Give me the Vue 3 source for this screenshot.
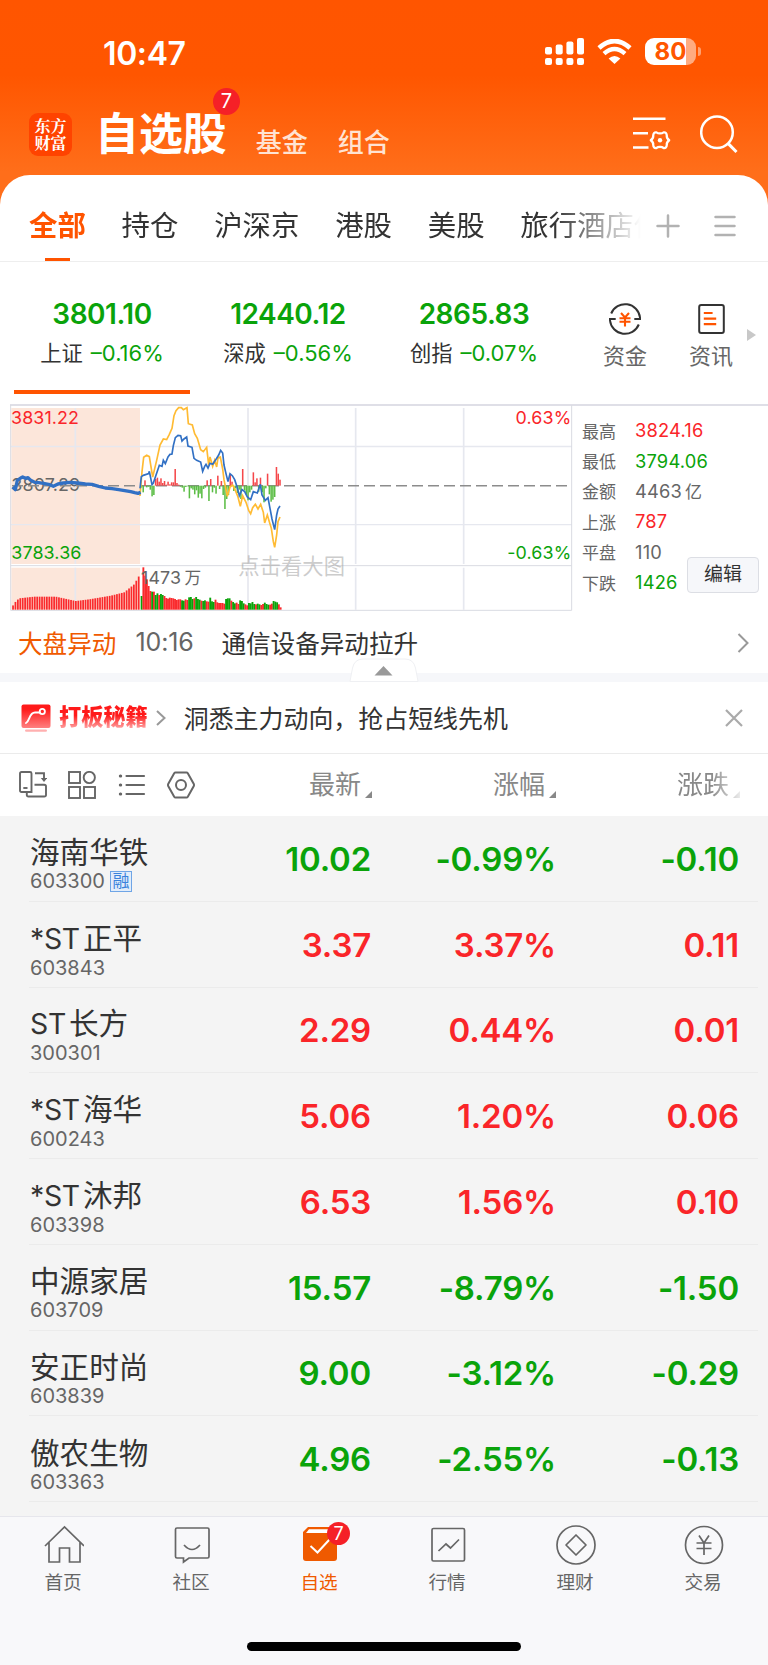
<template>
  <div class="phone">
    <header class="top">
      <div class="status">
        <span class="clock">10:47</span>
        <div class="status-icons">
          <svg class="signal" viewBox="0 0 39 27" fill="#fff">
            <rect x="0" y="9" width="7" height="7.5" rx="2" />
            <rect x="10.7" y="6.5" width="7" height="10" rx="2" />
            <rect x="21.4" y="3.5" width="7" height="13" rx="2" />
            <rect x="32" y="0" width="7" height="16.5" rx="2" />
            <rect x="0" y="20" width="7" height="7" rx="2" />
            <rect x="10.7" y="20" width="7" height="7" rx="2" />
            <rect x="21.4" y="20" width="7" height="7" rx="2" />
            <rect x="32" y="20" width="7" height="7" rx="2" />
          </svg>
          <svg class="wifi" viewBox="0 0 35 25">
            <path d="M2 9 Q17.5 -5 33 9" fill="none" stroke="#fff" stroke-width="4.6" />
            <path d="M7 14.6 Q17.5 5.4 28 14.6" fill="none" stroke="#fff" stroke-width="4.4" />
            <path d="M11.6 19.4 Q17.5 14.4 23.4 19.4 L17.5 25 Z" fill="#fff" />
          </svg>
          <div class="battery"><span>80</span></div>
        </div>
      </div>
      <div class="nav">
        <div class="logo"><span>东方</span><span>财富</span></div>
        <h1 class="title">自选股<i class="badge">7</i></h1>
        <span class="sub">基金</span>
        <span class="sub sub-2">组合</span>
        <svg class="ic-filter" viewBox="0 0 38 36" fill="none" stroke="#fff" stroke-width="2.6">
          <path d="M0 2.8 H32.5 M0 17.3 H15 M0 31.5 H15.5" />
          <path
            d="M17.8 24.2 Q20.6 22.2 20.2 19.6 Q20.4 16 23.4 16.4 Q25.2 17.6 27 17.4 Q28.8 17.6 30.6 16.4 Q33.6 16 33.8 19.6 Q33.4 22.2 36.2 24.2 Q33.4 26.2 33.8 28.8 Q33.6 32.4 30.6 32 Q28.8 30.8 27 31 Q25.2 30.8 23.4 32 Q20.4 32.4 20.2 28.8 Q20.6 26.2 17.8 24.2 Z"
            stroke-linejoin="round" stroke-width="2.3"
          />
          <circle cx="27" cy="24.2" r="2.2" fill="#fff" stroke="none" />
        </svg>
        <svg class="ic-search" viewBox="0 0 38 39" fill="none" stroke="#fff" stroke-width="2.5">
          <circle cx="17" cy="17.3" r="15.8" />
          <path d="M28.3 28.6 L36.5 37" stroke-width="3" />
        </svg>
      </div>
    </header>

    <main class="card">
      <nav class="tabs">
        <div class="tab-list">
          <span v-for="(t, i) in tabs" :key="t" class="tab" :class="{ on: i === 0 }">{{ t }}</span>
        </div>
        <svg class="ic-plus" viewBox="0 0 24 24" stroke="#b2b2b2" stroke-width="2.5" stroke-linecap="round">
          <path d="M1.5 12 H22.5 M12 1.5 V22.5" />
        </svg>
        <svg class="ic-menu" viewBox="0 0 22 22" stroke="#b2b2b2" stroke-width="2.5" stroke-linecap="round">
          <path d="M1.5 2 H20.5 M1.5 11 H20.5 M1.5 20 H20.5" />
        </svg>
      </nav>

      <section class="indices">
        <div v-for="(q, i) in indices" :key="q.name" class="index" :class="{ on: i === 0 }">
          <b>{{ q.value }}</b>
          <p>{{ q.name }}<em>{{ q.pct }}</em></p>
        </div>
        <div class="quick fund">
          <svg viewBox="0 0 32 32" fill="none" stroke="#333" stroke-width="2">
            <path d="M2.2 10.5 A15 15 0 0 1 31 14.5 V16 H25.3" />
            <path d="M29.8 21.5 A15 15 0 0 1 1 17.5 V16 H6.7" />
            <path d="M12 10 L16 14.5 L20 10 M10.5 15.2 H21.5 M10.5 18.8 H21.5 M16 14.5 V23.5" stroke="#ff5400" stroke-width="2.1" />
          </svg>
          <span>资金</span>
        </div>
        <div class="quick">
          <svg viewBox="0 0 32 32" fill="none" stroke="#333" stroke-width="2">
            <rect x="4.2" y="2" width="24.6" height="28" rx="2" />
            <path d="M8.8 10 H17.6 M8.8 15.6 H21.2 M8.8 21.2 H21.2" stroke="#ff5400" stroke-width="2.2" />
          </svg>
          <span>资讯</span>
        </div>
        <i class="more"></i>
      </section>

      <section class="market">
        <!-- intraday chart, three units per pixel -->
        <svg class="chart" viewBox="0 27 1719 624">
          <rect x="34" y="39" width="386" height="468" fill="#fce6da" />
          <rect x="34" y="518" width="386" height="126" fill="#fce6da" />
          <g stroke="#e6e8ef" fill="none">
            <path d="M32 154.500 H1716 M32 389 H1716" stroke-width="4" />
            <path d="M226 39 V507 M226 518 V644 M744 39 V507 M744 518 V644 M1067 39 V507 M1067 518 V644 M1391 39 V507 M1391 518 V644" stroke-width="5" />
            <path d="M32 30 V646 H1715 V30 M32 512 H1715" stroke="#d9dbe2" stroke-width="3" />
          </g>
          <text x="34" y="289" class="t gray">3807.29</text>
          <path d="M36 272 H1706" stroke="#8c8c8c" stroke-width="4.500" stroke-dasharray="33 15" />
          <rect v-for="(b, i) in auction" :key="'a' + i" :x="b.x" :y="b.y" width="5.200" :height="644 - b.y" fill="#fa2a2d" />
          <rect v-for="(b, i) in volumes" :key="'v' + i" :x="b.x" :y="b.y" width="5.600" :height="644 - b.y" :fill="b.c" />
          <rect v-for="(b, i) in flow" :key="'f' + i" :x="b.x" :y="b.y" width="4.600" :height="b.h" :fill="b.c" />
          <polyline :points="avgLine" fill="none" stroke="#ffbb33" stroke-width="5" />
          <polyline :points="preLine" fill="none" stroke="#3170c4" stroke-width="10" stroke-linejoin="round" />
          <polyline :points="priceLine" fill="none" stroke="#3170c4" stroke-width="5" />
          <text x="33" y="86" class="t red">3831.22</text>
          <text x="34" y="491" class="t green">3783.36</text>
          <text x="1714" y="86" class="t red end">0.63%</text>
          <text x="1714" y="491" class="t green end">-0.63%</text>
          <text x="423" y="568" class="t gray">1473<tspan dx="10" font-size="50">万</tspan></text>
          <text x="715" y="537" class="hint">点击看大图</text>
        </svg>
        <dl class="stats">
          <div v-for="s in stats" :key="s.k">
            <dt>{{ s.k }}</dt>
            <dd :class="s.c">{{ s.v }}<span v-if="s.u" class="unit">{{ s.u }}</span></dd>
          </div>
        </dl>
        <button class="edit">编辑</button>
      </section>

      <section class="news">
        <span class="news-tag">大盘异动</span>
        <time>10:16</time>
        <span class="news-text">通信设备异动拉升</span>
        <svg class="chev" viewBox="0 0 12 20" fill="none" stroke="#999" stroke-width="2">
          <path d="M1.500 1 L10.500 10 L1.500 19" />
        </svg>
        <svg class="bump" viewBox="0 0 70 24">
          <path d="M1 23.500 L3.500 10 Q5.500 1 14 1 H56 Q64.500 1 66.500 10 L69 23.500 Z" fill="#fff" stroke="#eff0f3" />
          <path d="M25.500 17.500 L34.500 8 L43.500 17.500 Z" fill="#999" />
        </svg>
      </section>

      <section class="promo">
        <svg class="promo-icon" viewBox="0 0 30 28">
          <defs>
            <linearGradient id="promoRed" x1="0" y1="0" x2="0" y2="1">
              <stop offset="0.200" stop-color="#ff1a1a" />
              <stop offset="1" stop-color="#ff8080" />
            </linearGradient>
          </defs>
          <rect x="0.500" y="0.500" width="29" height="23.500" rx="2" fill="url(#promoRed)" />
          <path d="M5 19 C9 17 8 8.500 14 8.500 H19" fill="none" stroke="#fff" stroke-width="1.900" stroke-linecap="round" />
          <circle cx="21.300" cy="7.500" r="2.600" fill="none" stroke="#fff" stroke-width="1.800" />
          <rect x="4" y="25.400" width="22" height="2.400" rx="1.200" fill="#ffb0b0" />
        </svg>
        <b>打板秘籍</b>
        <svg class="promo-chev" viewBox="0 0 10 16" fill="none" stroke="#999" stroke-width="2">
          <path d="M1 1 L8.500 8 L1 15" />
        </svg>
        <span class="promo-text">洞悉主力动向，抢占短线先机</span>
        <svg class="close" viewBox="0 0 18 18" stroke="#aaa" stroke-width="2.200">
          <path d="M1 1 L17 17 M17 1 L1 17" />
        </svg>
      </section>

      <section class="thead">
        <div class="tools">
          <svg viewBox="0 0 28 28" fill="none" stroke="#666" stroke-width="1.900">
            <path d="M8.500 21 H2.500 Q1 21 1 19.500 V2.500 Q1 1 2.500 1 H11 Q12.500 1 12.500 2.500 V21 H8" />
            <path d="M4.300 17 H8.500" />
            <path d="M16 2.200 H25 V8.500" />
            <path d="M21.800 7 H28.200 L25 11 Z" fill="#666" stroke="none" />
            <path d="M15.500 13.800 H25.200 Q27 13.800 27 15.500 V24 Q27 25.500 25.200 25.500 H9.500 Q7.800 25.500 7.800 24 V21" />
          </svg>
          <svg viewBox="0 0 28 28" fill="none" stroke="#666" stroke-width="1.900">
            <rect x="1" y="1" width="11" height="11" />
            <circle cx="21.300" cy="6.500" r="5.600" />
            <rect x="1" y="16" width="11" height="11" />
            <rect x="16" y="16" width="11" height="11" />
          </svg>
          <svg viewBox="0 0 28 28" fill="none" stroke="#666" stroke-width="2.200" stroke-linecap="round">
            <path d="M8.500 5 H26 M8.500 14 H26 M8.500 23 H26" />
            <path d="M2.300 5 H2.700 M2.300 14 H2.700 M2.300 23 H2.700" stroke-width="3" />
          </svg>
          <svg viewBox="0 0 28 28" fill="none" stroke="#666" stroke-width="2">
            <path d="M8.500 1.500 H19.500 Q20.300 1.500 20.800 2.300 L26.800 13 Q27.200 14 26.800 15 L20.800 25.700 Q20.300 26.500 19.500 26.500 H8.500 Q7.700 26.500 7.200 25.700 L1.200 15 Q0.800 14 1.200 13 L7.200 2.300 Q7.700 1.500 8.500 1.500 Z" />
            <circle cx="14" cy="14" r="5" />
          </svg>
        </div>
        <span class="th th-1">最新<i></i></span>
        <span class="th th-2">涨幅<i></i></span>
        <span class="th th-3">涨跌<i></i></span>
      </section>

      <section class="list">
        <div v-for="s in stocks" :key="s.code" class="row" :class="s.up ? 'red' : 'green'">
          <div class="who">
            <div class="name"><span v-if="s.st" class="st">{{ s.st }}</span>{{ s.name }}</div>
            <div class="code">{{ s.code }}<i v-if="s.margin">融</i></div>
          </div>
          <b>{{ s.price }}</b>
          <b>{{ s.pct }}</b>
          <b>{{ s.diff }}</b>
        </div>
      </section>
    </main>

    <footer class="tabbar">
      <div class="item">
        <svg viewBox="0 0 40 40" class="line">
          <path d="M1 21 L20.500 2 L40 21 M5 17.500 V37 H15.500 V23 H25.500 V37 H36 V17.500" />
        </svg>
        <span>首页</span>
      </div>
      <div class="item">
        <svg viewBox="0 0 40 40" class="line">
          <path d="M5 3 H35.500 Q37 3 37 4.500 V31.500 Q37 33 35.500 33 H17 L11.500 37 V33 H5 Q3.500 33 3.500 31.500 V4.500 Q3.500 3 5 3 Z" />
          <path d="M12 20 Q20 29 28 20" />
        </svg>
        <span>社区</span>
      </div>
      <div class="item on">
        <svg viewBox="0 0 40 40">
          <path d="M8 2 H34 V12 H3 V7 Z" fill="#f05a00" />
          <path d="M9 4.300 H34 L30 8 H6 Z" fill="#fff" />
          <path d="M3 8 H37 V33 Q37 36 34 36 H6 Q3 36 3 33 Z" fill="#ef5a00" />
          <path d="M10.500 21 L17.500 27.500 L29.500 14.500" fill="none" stroke="#fff" stroke-width="2" />
        </svg>
        <i class="badge">7</i>
        <span>自选</span>
      </div>
      <div class="item">
        <svg viewBox="0 0 40 40" class="line">
          <rect x="4" y="3.500" width="32.500" height="32.500" rx="1.500" />
          <path d="M10.500 26 L18 19 L22.500 23 L31 14.500" />
        </svg>
        <span>行情</span>
      </div>
      <div class="item">
        <svg viewBox="0 0 40 40" class="line">
          <circle cx="20" cy="20" r="19" />
          <path d="M20 10 L30 20 L20 30 L10 20 Z" stroke-linejoin="round" />
        </svg>
        <span>理财</span>
      </div>
      <div class="item">
        <svg viewBox="0 0 40 40" class="line">
          <circle cx="20" cy="20" r="18.500" />
          <path d="M15 10.500 L20 18 L25 10.500 M12.500 18 H27.500 M12.500 23.500 H27.500 M20 18 V30" />
        </svg>
        <span>交易</span>
      </div>
      <div class="home-bar"></div>
    </footer>
  </div>
</template>

<script setup>
const tabs = ['全部', '持仓', '沪深京', '港股', '美股', '旅行酒店传']

const indices = [
  { name: '上证', value: '3801.10', pct: '–0.16%' },
  { name: '深成', value: '12440.12', pct: '–0.56%' },
  { name: '创指', value: '2865.83', pct: '–0.07%' },
]

const stats = [
  { k: '最高', v: '3824.16', c: 'red' },
  { k: '最低', v: '3794.06', c: 'green' },
  { k: '金额', v: '4463', u: '亿', c: 'gray' },
  { k: '上涨', v: '787', c: 'red' },
  { k: '平盘', v: '110', c: 'gray' },
  { k: '下跌', v: '1426', c: 'green' },
]

const stocks = [
  { name: '海南华铁', code: '603300', price: '10.02', pct: '-0.99%', diff: '-0.10', up: false, margin: true },
  { st: '*ST', name: '正平', code: '603843', price: '3.37', pct: '3.37%', diff: '0.11', up: true },
  { st: 'ST', name: '长方', code: '300301', price: '2.29', pct: '0.44%', diff: '0.01', up: true },
  { st: '*ST', name: '海华', code: '600243', price: '5.06', pct: '1.20%', diff: '0.06', up: true },
  { st: '*ST', name: '沐邦', code: '603398', price: '6.53', pct: '1.56%', diff: '0.10', up: true },
  { name: '中源家居', code: '603709', price: '15.57', pct: '-8.79%', diff: '-1.50', up: false },
  { name: '安正时尚', code: '603839', price: '9.00', pct: '-3.12%', diff: '-0.29', up: false },
  { name: '傲农生物', code: '603363', price: '4.96', pct: '-2.55%', diff: '-0.13', up: false },
]

const RED = '#fa2a2d'
const GREEN = '#0aa30a'

// value of a piecewise linear outline at x
function at(pts, x) {
  for (let i = 1; i < pts.length; i++) {
    const [x0, y0] = pts[i - 1]
    const [x1, y1] = pts[i]
    if (x <= x1) return y0 + ((y1 - y0) * (x - x0)) / (x1 - x0)
  }
  return pts[pts.length - 1][1]
}

// call auction volume
const auctionTop = [[36, 632], [45, 619], [55, 610], [100, 605], [165, 605], [225, 618], [265, 613], [330, 602], [370, 592], [400, 568], [415, 542]]
const auction = Array.from({ length: 53 }, (_, i) => {
  const x = 36.5 + i * 7.25
  return { x, y: at(auctionTop, x) }
})

// session volume, g = falling minute, r = rising minute
const tops = [
  603, 517, 542, 553, 573, 588, 590, 590, 600, 595, 600, 597, 600, 603, 609, 611, 608, 609, 610, 612,
  615, 613, 613, 616, 617, 613, 615, 607, 606, 612, 610, 606, 612, 614, 617, 618, 616, 619, 620, 608,
  619, 621, 614, 622, 624, 624, 624, 626, 612, 610, 610, 617, 621, 625, 623, 627, 616, 618, 625, 628,
  631, 624, 625, 621, 627, 628, 626, 628, 630, 627, 623, 627, 629, 629, 626, 618, 620, 622, 628, 637,
]
const kinds = 'grrrrrgrggrggrrrrrrrrrrggrrgggrgggrggrrgggrrrrrrgggrggrrgggrrggggrggrrgggrrgggrr'
const volumes = tops.map((y, i) => ({ x: 422 + i * 5.28, y, c: kinds[i] === 'g' ? GREEN : RED }))

// net flow around the previous close
const flowValues = [
  -6, -20, 16, -5, -3, -12, -32, -28, 20, 24, 12, 22, 8, 14, 3, 12, 4, 10, 10, 50,
  8, 3, -3, -6, -18, -4, -2, -38, -8, -12, -26, -14, -36, -24, -38, -10, -6, 16, -46, 20,
  -20, -6, -24, 30, -10, 14, -28, -70, -40, -28, 34, 12, -16, -8, -22, -12, -40, 50, -14, -26,
  -44, -20, -12, 40, 10, 22, -18, 24, -20, -50, -8, 36, -26, -48, -42, -34, 56, 36, 18,
]
const flow = flowValues.map((v, i) => ({
  x: 422 + i * 5.33,
  y: v > 0 ? 272 - v : 272,
  h: Math.abs(v),
  c: v > 0 ? '#f5474a' : '#5bbd45',
}))

const preLine =
  '38,276 46,284 52,256 62,249 68,246 76,250 84,248 92,256 104,262 116,263 130,265 146,268 160,274 174,267 190,264 210,262 232,264 256,267 276,268 296,274 316,279 336,281 356,284 374,287 392,290 404,293 414,295 422,292'

const priceLine =
  '420,280 424,245 430,241 446,236 448,229 456,269 460,264 478,211 486,214 490,196 496,206 504,186 510,178 516,177 520,152 526,128 534,121 542,122 546,138 552,132 560,126 564,153 576,157 582,190 590,196 602,201 608,229 614,214 618,208 624,219 630,205 638,208 646,196 656,180 662,166 668,174 672,210 678,236 684,260 690,236 697,242 704,254 712,278 718,302 726,284 734,290 742,306 752,314 760,290 772,294 781,268 786,300 796,316 804,308 810,340 816,372 824,404 830,360 834,342 840,333'

const avgLine =
  '420,303 426,230 431,187 440,181 448,185 458,246 470,196 480,150 490,132 500,134 508,118 516,100 522,62 528,47 536,38 544,38 550,44 561,38 565,86 577,90 584,116 592,130 602,164 610,170 620,157 626,210 630,186 638,214 644,196 650,216 654,188 661,186 668,222 672,254 682,304 690,276 698,270 706,286 714,306 721,334 728,302 738,322 746,346 752,356 758,338 766,328 774,342 782,328 790,352 794,384 802,360 808,380 814,400 820,440 824,457 830,420 834,380 840,366'
</script>

<style>
body {
  margin: 0;
  background: #f8f8fa;
}
</style>

<style scoped>
.phone {
  width: 768px;
  height: 1665px;
  display: flex;
  flex-direction: column;
  overflow: hidden;
  background: #f8f8fa;
  color: #333;
  font-family: Inter, "Noto Sans CJK SC", sans-serif;
}

i,
em {
  font-style: normal;
}

svg {
  display: block;
  flex: none;
}

.red { color: #fa2529; }
.green { color: #0aa30a; }
.gray { color: #666; }

/* header */
.top {
  height: 205px;
  margin-bottom: -30px;
  flex: none;
  background: linear-gradient(#ff5500 0, #ff5600 75px, #ff6e1a 172px);
}

.status {
  display: flex;
  justify-content: space-between;
  align-items: center;
  height: 103px;
  padding: 0 66px 0 103px;
  box-sizing: border-box;
}

.clock {
  color: #fff;
  font-size: 32px;
  font-weight: 600;
  letter-spacing: -0.4px;
  margin-top: 3px;
}

.status-icons {
  display: flex;
  align-items: center;
}

.signal { width: 39px; height: 27px; }
.wifi { width: 35px; height: 25px; margin: 0 13px; }

.battery {
  position: relative;
  width: 51px;
  height: 27px;
  border-radius: 9px;
  margin-right: 6px;
  background: linear-gradient(90deg, #fff 41px, #ffab80 41px);
  color: #ff5600;
  font-size: 24px;
  font-weight: 700;
  line-height: 27px;
  text-align: center;
}

.battery::after {
  content: "";
  position: absolute;
  right: -5px;
  top: 9px;
  width: 3px;
  height: 9px;
  border-radius: 0 3px 3px 0;
  background: #ffa070;
}

.nav {
  display: flex;
  align-items: center;
  height: 62px;
  padding: 0 30px 0 29px;
}

.logo {
  width: 43px;
  height: 43px;
  display: flex;
  flex-direction: column;
  align-items: center;
  justify-content: center;
  border-radius: 9px;
  background: #ff4300;
  color: #fff;
  font-family: "Noto Serif CJK SC", "Noto Sans CJK SC", serif;
  font-size: 16px;
  font-weight: 700;
  line-height: 17.5px;
}

.title {
  position: relative;
  margin: 0 0 0 23px;
  color: #fff;
  font-size: 43.9px;
  font-weight: 600;
  line-height: 60px;
}

.badge {
  position: absolute;
  border-radius: 50%;
  background: #f52027;
  color: #fff;
  text-align: center;
  font-weight: 400;
}

.title .badge {
  left: 118px;
  top: -16px;
  width: 27px;
  height: 27px;
  font-size: 20px;
  line-height: 27px;
}

.sub {
  margin: 18px 0 0 29px;
  color: #ffe3d3;
  font-size: 26px;
  font-weight: 500;
  line-height: 30px;
}

.sub-2 { margin-left: 30px; }
.ic-filter { width: 38px; height: 36px; margin-left: auto; }
.ic-search { width: 38px; height: 39px; margin-left: 29px; }

/* card */
.card {
  flex: none;
  height: 1341px;
  background: #fff;
  border-radius: 30px 30px 0 0;
  overflow: hidden;
}

.tabs {
  display: flex;
  align-items: center;
  height: 86px;
  padding: 0 32px 0 29px;
  border-bottom: 1px solid #eee;
}

.tab-list {
  display: flex;
  align-self: flex-end;
  gap: 35.8px;
  width: 612px;
  overflow: hidden;
  -webkit-mask-image: linear-gradient(90deg, #000 525px, transparent 612px);
  mask-image: linear-gradient(90deg, #000 525px, transparent 612px);
}

.tab {
  position: relative;
  flex: none;
  height: 56px;
  font-size: 28.4px;
  line-height: 41px;
}

.tab.on {
  color: #ff5400;
  font-weight: 700;
}

.tab.on::after {
  content: "";
  position: absolute;
  left: 16px;
  bottom: 0;
  width: 25px;
  height: 3px;
  background: #ff5400;
}

.ic-plus { width: 24px; height: 24px; margin: 15px auto 0 15px; }
.ic-menu { width: 22px; height: 22px; margin-top: 15px; }

/* index strip */
.indices {
  display: flex;
  height: 143px;
  padding-left: 9px;
}

.index {
  position: relative;
  width: 186px;
  padding-top: 35px;
  text-align: center;
}

.index b {
  display: block;
  color: #0aa30a;
  font-size: 28px;
  font-weight: 600;
  line-height: 34px;
  letter-spacing: -0.5px;
}

.index p {
  margin: 7px 0 0;
  font-size: 21.3px;
  line-height: 30px;
  white-space: nowrap;
}

.index em {
  margin-left: 8px;
  color: #0aa30a;
  font-size: 22px;
}

.index.on::after {
  content: "";
  position: absolute;
  left: 5px;
  bottom: 11px;
  width: 176px;
  height: 4px;
  background: #ff5400;
}

.quick {
  width: 86px;
  padding-top: 41px;
  display: flex;
  flex-direction: column;
  align-items: center;
  color: #666;
  font-size: 22px;
  line-height: 30px;
}

.quick.fund { margin-left: 15px; }
.quick svg { width: 32px; height: 32px; margin-bottom: 6px; }

.more {
  margin: 67px 0 0 -7px;
  width: 0;
  height: 0;
  border: 6px solid transparent;
  border-left: 9px solid #c8c8c8;
  border-right: 0;
}

/* market */
.market {
  position: relative;
  display: flex;
  height: 208px;
  margin-top: -1px;
  background: linear-gradient(#dfdfe7, #dfdfe7) 10px 0 / 758px 2px no-repeat;
}

.chart { width: 573px; height: 208px; }

.t {
  font-size: 53.5px;
  letter-spacing: 0.4px;
}

.t.red { fill: #fa2529; }
.t.green { fill: #0aa30a; }
.t.gray { fill: #666; }
.end { text-anchor: end; }

.hint {
  font-size: 64px;
  fill: #aaa;
  fill-opacity: 0.6;
}

.stats {
  margin: 11px 0 0 9px;
}

.stats div {
  display: flex;
  align-items: center;
  height: 30.4px;
}

.stats dt {
  width: 53px;
  color: #666;
  font-size: 17px;
}

.stats dd {
  margin: 0;
  font-size: 18.3px;
  letter-spacing: 0.2px;
}

.unit {
  margin-left: 3px;
  font-size: 17px;
}

.edit {
  position: absolute;
  left: 687px;
  top: 153px;
  width: 72px;
  height: 36px;
  padding: 0;
  border: 1px solid #dcdee4;
  border-radius: 4px;
  background: #f6f7fa;
  color: #333;
  font-family: inherit;
  font-size: 19px;
  line-height: 34px;
}

/* news line */
.news {
  position: relative;
  display: flex;
  align-items: center;
  height: 61px;
  padding: 0 19px 0 18px;
  border-bottom: 9px solid #f6f7fa;
  font-size: 24.6px;
}

.news-tag {
  margin-top: -2px;
  color: #f05a00;
}

.news time {
  width: 67px;
  margin: -2px 0 0 19px;
  padding-right: 19px;
  color: #666;
  font-size: 25px;
  letter-spacing: -0.1px;
}

.news-text { margin-top: -2px; }
.chev { width: 12px; height: 20px; margin-left: auto; }

.bump {
  position: absolute;
  left: 349px;
  bottom: -9px;
  width: 70px;
  height: 24px;
}

/* promo */
.promo {
  display: flex;
  align-items: center;
  height: 71px;
  padding: 0 25px 0 21px;
  border-bottom: 1px solid #ebebeb;
  font-size: 24.95px;
}

.promo-icon { width: 30px; height: 28px; }
.promo-text { margin-top: -1px; }

.promo b {
  margin: -1px 8px 0 8px;
  font-size: 22.2px;
  font-weight: 900;
  line-height: 30px;
  background: linear-gradient(#ff1a1a 45%, #ff9a9a 85%);
  -webkit-background-clip: text;
  background-clip: text;
  color: transparent;
}

.promo-chev { width: 10px; height: 16px; margin-right: 18px; }
.close { width: 18px; height: 18px; margin-left: auto; }

/* table */
.thead {
  display: flex;
  align-items: center;
  height: 62px;
  color: #888;
  font-size: 26px;
}

.tools {
  display: flex;
  gap: 21.4px;
  width: 290px;
  padding-left: 19px;
  box-sizing: border-box;
}

.tools svg { width: 28px; height: 28px; }

.th {
  display: flex;
  justify-content: flex-end;
  align-items: flex-end;
  width: 184px;
  line-height: 36px;
}

.th i {
  width: 0;
  height: 0;
  margin: 0 0 5px 4px;
  border-bottom: 7px solid #888;
  border-left: 7px solid transparent;
}

.th-1 { width: 82px; }

.th-3 {
  -webkit-mask-image: linear-gradient(90deg, #000 155px, transparent 190px);
  mask-image: linear-gradient(90deg, #000 155px, transparent 190px);
}

.list {
  height: 700px;
  background: #f4f4f4;
}

.row {
  display: grid;
  grid-template-columns: 183px 159px 185px 183px;
  align-items: center;
  height: 85.75px;
  margin: 0 10px 0 29px;
  box-sizing: border-box;
  border-bottom: 1px solid #ebebeb;
}

.row b {
  text-align: right;
  font-size: 33px;
  font-weight: 600;
  letter-spacing: -0.2px;
  padding-top: 1px;
}

.who {
  padding: 12px 0 0 1px;
}

.name {
  color: #333;
  font-size: 29.6px;
  line-height: 34px;
  white-space: nowrap;
}

.st {
  margin-right: 3px;
  font-size: 28.4px;
  letter-spacing: -0.3px;
}

.code {
  display: flex;
  align-items: center;
  height: 24px;
  color: #666;
  font-size: 20px;
  line-height: 24px;
}

.code i {
  margin-left: 5px;
  border: 1px solid #6fa5e6;
  width: 20px;
  height: 19px;
  background: #e2edfa;
  color: #3a83dc;
  font-size: 17px;
  line-height: 18px;
  text-align: center;
}

/* bottom bar */
.tabbar {
  position: relative;
  display: grid;
  grid-template-columns: repeat(6, 1fr);
  flex: 1;
  border-top: 1px solid #e6e6ec;
}

.item {
  position: relative;
  display: flex;
  flex-direction: column;
  align-items: center;
  padding-top: 8px;
  color: #666;
  font-size: 18.6px;
  line-height: 28px;
}

.item svg { width: 40px; height: 40px; margin-bottom: 3px; }
.item > span { margin-right: 2px; }
.item.on { color: #f05a00; }

.line {
  fill: none;
  stroke: #666;
  stroke-width: 1.7;
}

.item .badge {
  left: 71px;
  top: 5px;
  width: 23px;
  height: 23px;
  font-size: 18px;
  line-height: 23px;
}

.home-bar {
  position: absolute;
  left: 247px;
  bottom: 14px;
  width: 274px;
  height: 9px;
  border-radius: 5px;
  background: #000;
}
</style>
